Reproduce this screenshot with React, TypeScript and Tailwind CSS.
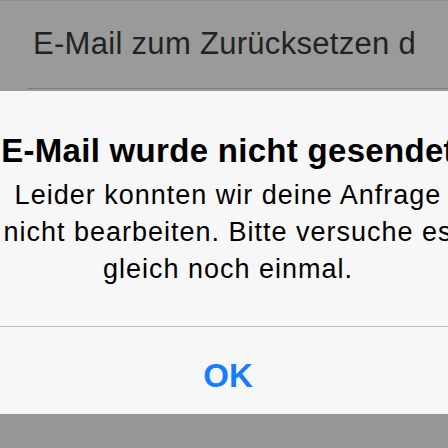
import React from "react";

export default function App() {
  return (
    <div className="w-[448px] h-[448px] overflow-hidden bg-[#979797] font-['Liberation_Sans',Arial,sans-serif] flex flex-col">
      <div className="h-[91px] bg-[#9a9a9a] flex flex-col shrink-0">
        <div className="h-px bg-[#8e8e8e]" />
        <div className="pl-[33px] pt-[25px] text-[31px] leading-[36px] tracking-[0.3px] text-[#222] whitespace-nowrap">
          E-Mail zum Zurücksetzen d
        </div>
        <div className="mt-auto mb-[2px] ml-[27px] h-px bg-[#7a7a7a]" />
      </div>
      <div className="h-[323px] bg-[#f7f7f7] shrink-0 flex flex-col items-center">
        <div className="w-[540px] ml-[8px] flex flex-col items-center">
          <div className="pt-[40px] text-[33px] leading-[40px] font-bold tracking-[0.3px] text-black whitespace-nowrap">
            E-Mail wurde nicht gesendet
          </div>
          <div className="mt-[6px] text-[27px] leading-[37px] tracking-[1px] text-black text-center whitespace-nowrap">
            Leider konnten wir deine Anfrage
            <br />
            nicht bearbeiten. Bitte versuche es
            <br />
            gleich noch einmal.
          </div>
        </div>
        <div className="mt-[38px] w-full h-px bg-[#bcbcbc]" />
        <div className="flex-1 w-full flex items-start justify-center pl-[8px]">
          <div className="pt-[29px] text-[33px] leading-[40px] font-semibold text-[#157efb]">
            OK
          </div>
        </div>
      </div>
    </div>
  );
}
